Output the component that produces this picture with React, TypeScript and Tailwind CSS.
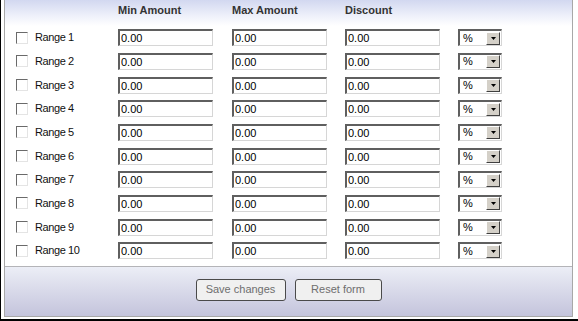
const ranges = Array.from({ length: 10 }, (_, i) => `Range ${i + 1}`);

function Field() {
  return (
    <input
      readOnly
      value="0.00"
      className="w-[95px] h-[17px] border-t-2 border-l-2 border-t-[#5f5f5f] border-l-[#5f5f5f] border-b border-r border-b-[#d6d6d6] border-r-[#d6d6d6] bg-white pl-[1px] text-[11px] leading-[13px] text-black outline-none"
    />
  );
}

function UnitSelect() {
  return (
    <div className="flex items-center w-[44px] h-[17px] border-t-2 border-l-2 border-t-[#5f5f5f] border-l-[#5f5f5f] border-b border-r border-b-[#d6d6d6] border-r-[#d6d6d6] bg-white">
      <span className="flex-1 pl-[3px] text-[11px] leading-[13px] text-black">%</span>
      <span className="flex items-center justify-center w-[14px] h-[13px] mr-[1px] bg-[#d4d0c8] border-t border-l border-t-white border-l-white border-b border-r border-b-[#404040] border-r-[#404040]">
        <svg width="5" height="3" viewBox="0 0 5 3">
          <path d="M0 0h5L2.5 3z" fill="#000" />
        </svg>
      </span>
    </div>
  );
}

export default function App() {
  return (
    <div className="w-[578px] h-[321px] bg-white border-l border-l-black border-b-2 border-b-black font-['Liberation_Sans',Arial,sans-serif]">
      {/* Panel */}
      <div className="ml-[3px] w-[569px] h-[317px] flex flex-col border-l border-r border-b border-[#a8a8a8]">
        {/* Header */}
        <div className="h-[26px] flex pt-[4px] bg-linear-to-b from-[#d2d8f0] via-[#eef0fa] via-60% to-white text-[11px] leading-[13px] font-bold text-[#333]">
          <div className="w-[113px]" />
          <div className="w-[114px]">Min Amount</div>
          <div className="w-[113px]">Max Amount</div>
          <div>Discount</div>
        </div>

        {/* Rows */}
        {ranges.map((r) => (
          <div key={r} className="h-[23.67px] flex items-center pl-[11px]">
            <span className="w-[12px] h-[12px] border-t border-l border-t-[#6a6a6a] border-l-[#6a6a6a] border-b border-r border-b-[#e4e4e4] border-r-[#e4e4e4] bg-white" />
            <span className="w-[90px] pl-[7px] text-[11px] tracking-[-0.4px] leading-[13px] text-[#111]">{r}</span>
            <Field />
            <div className="w-[19px]" />
            <Field />
            <div className="w-[18px]" />
            <Field />
            <div className="w-[18px]" />
            <UnitSelect />
          </div>
        ))}

        {/* Footer */}
        <div className="mt-[3px] flex-1 border-t border-[#b4b4b8] bg-linear-to-b from-[#eceef6] to-[#c4c4dc] flex justify-center gap-[9px] pt-[12px]">
          <button className="w-[90px] h-[22px] rounded-[3px] border border-[#4a4a4a] bg-[#f0f0f0] text-[11px] text-[#6e6e6e]">
            Save changes
          </button>
          <button className="w-[87px] h-[22px] rounded-[3px] border border-[#4a4a4a] bg-[#f0f0f0] text-[11px] text-[#6e6e6e]">
            Reset form
          </button>
        </div>
      </div>
    </div>
  );
}
